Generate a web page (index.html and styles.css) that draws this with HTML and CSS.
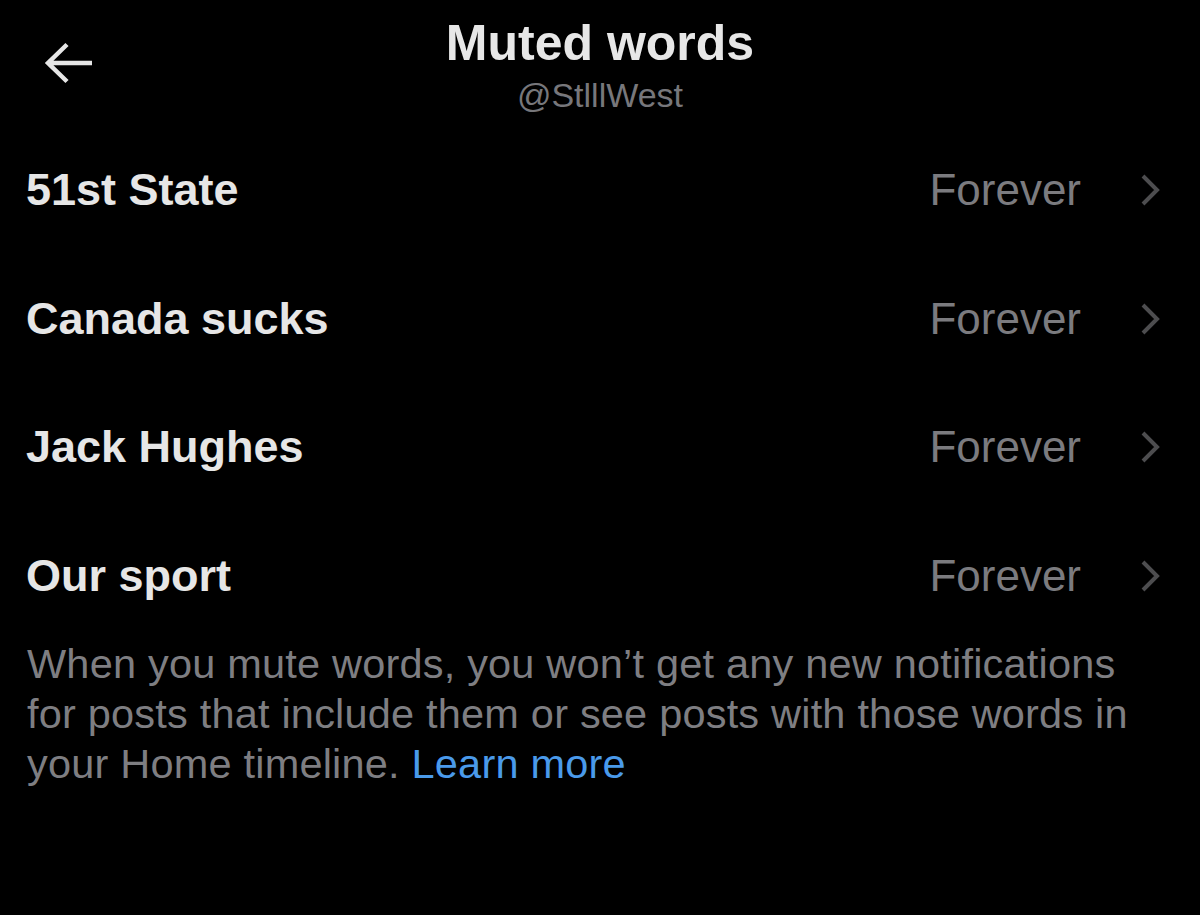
FILE: index.html
```html
<!DOCTYPE html>
<html lang="en">
<head>
<meta charset="utf-8">
<title>Muted words</title>
<link rel="stylesheet" href="styles.css">
</head>
<body>
<div class="screen">
  <header class="header">
    <div class="back">
      <svg class="back-icon" width="50" height="42" viewBox="0 0 50 42" aria-hidden="true">
        <path d="M4 21 H48 M23 2.5 L4 21 L23 39.5" fill="none" stroke="#e6e6e6" stroke-width="4.5" stroke-linejoin="miter"/>
      </svg>
    </div>
    <div class="titles">
      <div class="title">Muted words</div>
      <div class="handle">@StlllWest</div>
    </div>
    <div class="spacer"></div>
  </header>
  <ul class="list">
    <li class="row"><span class="label">51st State</span><span class="value">Forever</span><svg class="chev" width="20" height="32" viewBox="0 0 20 32" aria-hidden="true"><path d="M3 2 L17 16 L3 30" fill="none" stroke="#4d4d4f" stroke-width="4"/></svg></li>
    <li class="row"><span class="label">Canada sucks</span><span class="value">Forever</span><svg class="chev" width="20" height="32" viewBox="0 0 20 32" aria-hidden="true"><path d="M3 2 L17 16 L3 30" fill="none" stroke="#4d4d4f" stroke-width="4"/></svg></li>
    <li class="row"><span class="label">Jack Hughes</span><span class="value">Forever</span><svg class="chev" width="20" height="32" viewBox="0 0 20 32" aria-hidden="true"><path d="M3 2 L17 16 L3 30" fill="none" stroke="#4d4d4f" stroke-width="4"/></svg></li>
    <li class="row"><span class="label">Our sport</span><span class="value">Forever</span><svg class="chev" width="20" height="32" viewBox="0 0 20 32" aria-hidden="true"><path d="M3 2 L17 16 L3 30" fill="none" stroke="#4d4d4f" stroke-width="4"/></svg></li>
  </ul>
  <p class="note"><span class="note-text">When you mute words, you won’t get any new notifications for posts that include them or see posts with those words in your Home timeline.</span> <a class="link" href="#">Learn more</a></p>
</div>
</body>
</html>
```
FILE: styles.css
```css
html, body {
  margin: 0;
  padding: 0;
  background: #000;
}
body {
  font-family: "Liberation Sans", Arial, sans-serif;
  color: #e6e6e6;
}
.screen {
  width: 1200px;
  height: 915px;
  background: #000;
  overflow: hidden;
}
.header {
  display: grid;
  grid-template-columns: 1fr auto 1fr;
  padding-top: 17px;
  height: 98px;
}
.back {
  padding-left: 44px;
  padding-top: 25px;
}
.back-icon {
  display: block;
}
.titles {
  display: flex;
  flex-direction: column;
  align-items: center;
  gap: 6px;
}
.title {
  font-size: 50px;
  line-height: 52px;
  font-weight: 700;
  color: #e7e7e7;
}
.handle {
  font-size: 34px;
  line-height: 40px;
  color: #77777b;
}
.list {
  list-style: none;
  margin: 10px 0 0;
  padding: 0;
}
.row {
  display: flex;
  align-items: center;
  height: 128.5px;
  padding: 0 40px 0 26px;
}
.label {
  flex: 1;
  font-size: 45px;
  line-height: 52px;
  font-weight: 700;
  color: #e6e6e6;
  padding-top: 2px;
}
.value {
  font-size: 44px;
  line-height: 52px;
  color: #7b7b7f;
  padding-top: 2px;
}
.chev {
  display: block;
  margin-left: 59px;
  margin-top: 2px;
}
.note {
  margin: 0;
  padding: 0 40px 0 27px;
  font-size: 41.5px;
  line-height: 50px;
  letter-spacing: 0.2px;
  color: #7e7e82;
}
.link {
  color: #4a9aea;
  text-decoration: none;
}
```
